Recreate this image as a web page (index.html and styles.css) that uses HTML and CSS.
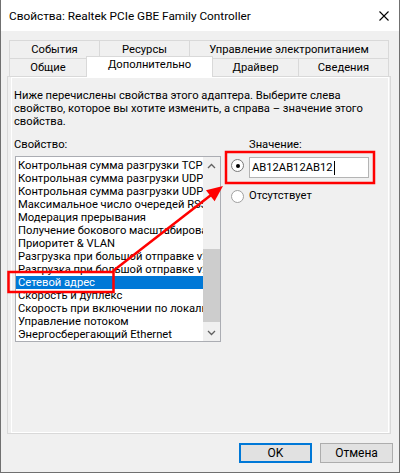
FILE: index.html
```html
<!DOCTYPE html>
<html lang="ru">
<head>
    <meta charset="UTF-8">
    <title>Свойства: Realtek PCIe GBE Family Controller</title>
    <link rel="stylesheet" href="styles.css">
</head>
<body>

    <div class="window">
        <div class="titlebar">
            <span class="title">Свойства: Realtek PCIe GBE Family Controller</span>
            <svg class="close" width="10" height="10" viewBox="0 0 10 10">
                <path d="M0.5 0.5 L9.5 9.5 M9.5 0.5 L0.5 9.5" stroke="#000" stroke-width="1.1" fill="none"/>
            </svg>
        </div>

        <div class="tabs">
            <div class="tab-row">
                <div class="tab" style="width: 91px">События</div>
                <div class="tab" style="width: 91px">Ресурсы</div>
                <div class="tab" style="width: 200px">Управление электропитанием</div>
            </div>
            <div class="tab-row">
                <div class="tab" style="width: 78px">Общие</div>
                <div class="tab active" style="width: 127px">Дополнительно</div>
                <div class="tab" style="width: 87px">Драйвер</div>
                <div class="tab" style="width: 91px">Сведения</div>
            </div>
        </div>

        <div class="panel">
            <div class="page">
                <div class="desc">
                    Ниже перечислены свойства этого адаптера. Выберите слева<br>
                    свойство, которое вы хотите изменить, а справа – значение этого<br>
                    свойства.
                </div>

                <div class="columns">
                    <div class="prop-col">
                        <div class="label">Свойство:</div>
                        <div class="listbox">
                            <div class="items">
                                <div class="item">Контрольная сумма разгрузки TCP</div>
                                <div class="item">Контрольная сумма разгрузки UDP</div>
                                <div class="item">Контрольная сумма разгрузки UDP</div>
                                <div class="item">Максимальное число очередей RSS</div>
                                <div class="item">Модерация прерывания</div>
                                <div class="item">Получение бокового масштабирования</div>
                                <div class="item">Приоритет &amp; VLAN</div>
                                <div class="item">Разгрузка при большой отправке v2</div>
                                <div class="item">Разгрузка при большой отправке v2</div>
                                <div class="item selected">Сетевой адрес</div>
                                <div class="item">Скорость и дуплекс</div>
                                <div class="item">Скорость при включении по локальной сети</div>
                                <div class="item">Управление потоком</div>
                                <div class="item">Энергосберегающий Ethernet</div>
                            </div>
                            <div class="scrollbar">
                                <div class="arrow">
                                    <svg width="9" height="6" viewBox="0 0 9 6"><path d="M1 5 L4.5 1.5 L8 5" stroke="#606060" stroke-width="1.3" fill="none"/></svg>
                                </div>
                                <div class="track"><div class="thumb"></div></div>
                                <div class="arrow">
                                    <svg width="9" height="6" viewBox="0 0 9 6"><path d="M1 1 L4.5 4.5 L8 1" stroke="#606060" stroke-width="1.3" fill="none"/></svg>
                                </div>
                            </div>
                        </div>
                    </div>

                    <div class="value-col">
                        <div class="label indent">Значение:</div>
                        <div class="opt-row first">
                            <span class="radio checked"></span>
                            <div class="input">AB12AB12AB12<span class="caret"></span></div>
                        </div>
                        <div class="opt-row second">
                            <span class="radio"></span>
                            <span>Отсутствует</span>
                        </div>
                    </div>
                </div>
            </div>
        </div>

        <div class="buttons">
            <button class="btn default">OK</button>
            <button class="btn">Отмена</button>
        </div>
    </div>

    <!-- red marks drawn over the dialog -->
    <svg class="marks" width="400" height="473" viewBox="0 0 400 473">
        <rect x="226" y="152" width="148" height="31" fill="none" stroke="#f00" stroke-width="2.5"/>
        <rect x="8.5" y="272" width="105" height="20" fill="none" stroke="#f00" stroke-width="2.5"/>
        <line x1="113" y1="271" x2="213" y2="193.5" stroke="#f00" stroke-width="2.5"/>
        <polygon points="223,186 214.6,201.3 206,190.3" fill="#f00"/>
    </svg>

</body>
</html>
```

FILE: styles.css
```css
body {
    margin: 0;
    position: relative;
    width: 400px;
    height: 473px;
    font-family: Roboto, "Noto Sans", sans-serif;
    font-size: 11.2px;
    color: #000;
}
.window {
    width: 400px;
    height: 473px;
    box-sizing: border-box;
    border: 1px solid #707070;
    border-top: 0;
    background-color: #f0f0f0;
}
.titlebar {
    height: 31px;
    background-color: #fff;
    display: flex;
    align-items: center;
    justify-content: space-between;
    padding: 0 10px 0 8px;
}
.title {
    font-size: 11.8px;
}
.tabs {
    margin: 9px 0 0 8px;
}
.tab-row {
    display: flex;
    align-items: flex-end;
    height: 18px;
}
.tab {
    box-sizing: border-box;
    height: 18px;
    border: 1px solid #d9d9d9;
    border-bottom: 0;
    margin-left: -1px;
    background-color: #f0f0f0;
    text-align: center;
    line-height: 17px;
    white-space: nowrap;
}
.tab:first-child {
    margin-left: 0;
}
.tab.active {
    position: relative;
    z-index: 1;
    height: 21px;
    margin-bottom: -1px;
    background-color: #fff;
    line-height: 16px;
}
.panel {
    box-sizing: border-box;
    width: 384px;
    height: 358px;
    margin-left: 6px;
    border: 1px solid #d9d9d9;
    padding: 0 1px 0 3px;
}
.page {
    box-sizing: border-box;
    height: 356px;
    border: 1px solid #fff;
    padding: 11px 0 0 2px;
}
.desc {
    line-height: 13px;
    white-space: nowrap;
}
.columns {
    display: flex;
    margin-top: 10px;
}
.label {
    line-height: 13px;
}
.label.indent {
    padding-left: 18px;
}
.listbox {
    display: flex;
    width: 206px;
    height: 186px;
    box-sizing: border-box;
    margin: 5px 0 0 1px;
    border: 1px solid #abadb3;
    background-color: #fff;
}
.items {
    width: 187px;
    padding-top: 2px;
    overflow: hidden;
}
.item {
    height: 13px;
    line-height: 13px;
    padding-left: 2px;
    white-space: nowrap;
}
.item.selected {
    background-color: #0078d7;
    color: #fff;
}
.scrollbar {
    width: 17px;
    display: flex;
    flex-direction: column;
    background-color: #f0f0f0;
}
.arrow {
    height: 17px;
    display: flex;
    align-items: center;
    justify-content: center;
}
.track {
    flex: 1;
    display: flex;
    flex-direction: column;
}
.thumb {
    height: 73px;
    margin: auto 0 2px 0;
    background-color: #cdcdcd;
}
.value-col {
    margin-left: 10px;
}
.opt-row {
    display: flex;
}
.opt-row.first {
    margin-top: 6px;
    align-items: flex-start;
}
.opt-row.second {
    margin-top: 11px;
    align-items: center;
    line-height: 14px;
}
.radio {
    box-sizing: border-box;
    width: 13px;
    height: 13px;
    margin-right: 5px;
    border: 1px solid #a0a0a0;
    border-radius: 50%;
    background-color: #fff;
    display: flex;
    align-items: center;
    justify-content: center;
}
.opt-row.first .radio {
    margin-top: 2px;
    border-color: #7a7a7a;
}
.radio.checked::after {
    content: "";
    width: 4px;
    height: 4px;
    border-radius: 50%;
    background-color: #000;
}
.input {
    box-sizing: border-box;
    width: 120px;
    height: 21px;
    border: 1px solid #b4b4b4;
    background-color: #fff;
    padding-left: 2px;
    display: flex;
    align-items: center;
}
.caret {
    width: 1px;
    height: 14px;
    background-color: #000;
    margin-left: 1px;
}
.buttons {
    display: flex;
    justify-content: flex-end;
    gap: 8px;
    padding: 9px 6px 0 0;
}
.btn {
    box-sizing: border-box;
    width: 73px;
    height: 20px;
    border: 1px solid #adadad;
    background-color: #e1e1e1;
    font-family: inherit;
    font-size: 12px;
    color: #000;
    padding: 0;
}
.btn.default {
    border: 2px solid #0078d7;
}
.marks {
    position: absolute;
    left: 0;
    top: 0;
    pointer-events: none;
}
```
